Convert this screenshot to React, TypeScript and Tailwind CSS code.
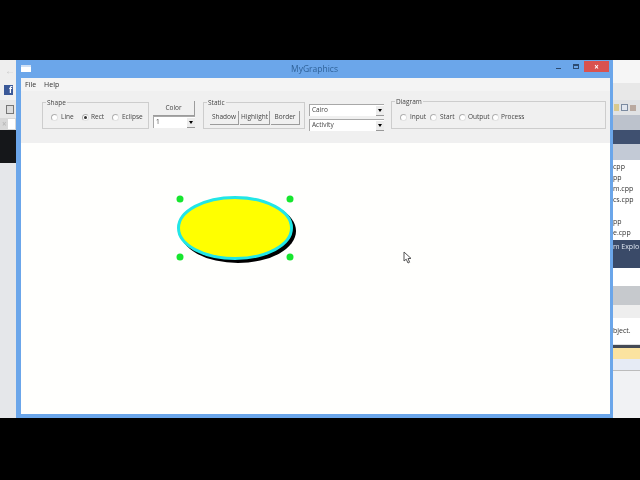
import React from "react";

const F = "font-['Open_Sans','Noto_Sans',sans-serif]";

function Radio({ on, label, gap, w }: { on?: boolean; label: string; gap: string; w: string }) {
  return (
    <div className={`flex items-center ${w}`}>
      <span className="w-[7px] h-[7px] rounded-full border border-[#b0b0b0] border-r-[#e2e2e2] border-b-[#e2e2e2] bg-white flex items-center justify-center shrink-0">
        {on && <span className="w-[3px] h-[3px] rounded-full bg-[#333]" />}
      </span>
      <span className={`${gap} text-[6.5px] leading-none text-[#444]`}>{label}</span>
    </div>
  );
}

function Group({ label, className, children }: { label: string; className: string; children: React.ReactNode }) {
  return (
    <div className={`relative border border-[#cdcdcd] ${className}`}>
      <span className="absolute left-[3px] top-[-5px] bg-[#f0f0f0] px-[1px] text-[6.5px] leading-[9px] text-[#444]">{label}</span>
      {children}
    </div>
  );
}

function Btn({ label, className }: { label: string; className: string }) {
  return (
    <div className={`h-[14px] bg-[#f0f0f0] border-r border-b border-[#9c9c9c] flex items-center justify-center text-[6.5px] leading-none text-[#444] ${className}`}>
      {label}
    </div>
  );
}

function Select({ value, className }: { value: string; className: string }) {
  return (
    <div className={`h-[12px] bg-white border-t border-l border-[#a8a8a8] flex items-center justify-between pl-[2px] ${className}`}>
      <span className="text-[6.5px] leading-none text-[#444]">{value}</span>
      <span className="w-[8px] h-[10px] bg-[#ececec] border-b border-[#999] flex items-center justify-center">
        <span className="w-0 h-0 border-l-[2.5px] border-r-[2.5px] border-t-[3px] border-l-transparent border-r-transparent border-t-black" />
      </span>
    </div>
  );
}

function LeftStrip() {
  return (
    <div className="w-[16px] shrink-0 flex flex-col bg-[#e6e8ea]">
      <div className="h-[20px] bg-[#eeeeee] flex items-center pl-[5px]">
        <span className="text-[10px] leading-none text-[#c9c9c9]">←</span>
      </div>
      <div className="h-[20px] bg-[#f0f0f0] flex items-center pl-[4px]">
        <span className="w-[9px] h-[10px] bg-[#3b5998] text-white text-[8px] leading-[10px] font-bold text-right pr-[1px]">f</span>
      </div>
      <div className="h-[18px] bg-[#e8e8e8] flex items-center pl-[6px]">
        <span className="w-[8px] h-[9px] border border-[#777] bg-[#ddd]" />
      </div>
      <div className="h-[12px] bg-[#d8d8d8] flex items-center pl-[2px] gap-[1px]">
        <span className="text-[8px] leading-none text-[#bbb] font-bold">×</span>
        <span className="w-[7px] h-[10px] bg-white" />
      </div>
      <div className="h-[33px] bg-[#15171a]" />
      <div className="flex-1 bg-[#e5e7ea]" />
    </div>
  );
}

function RightStrip() {
  const Row = ({ t }: { t: string }) => <div className="h-[11px] text-[7px] leading-[11px] text-[#333] whitespace-nowrap">{t}</div>;
  return (
    <div className="flex-1 flex flex-col bg-[#eceef2] overflow-hidden">
      <div className="h-[23px] bg-[#f6f6f6]" />
      <div className="h-[17px] bg-[#e8e8e8]" />
      <div className="h-[15px] bg-[#e0e2e4] flex items-center gap-[2px] pl-[1px]">
        <span className="w-[5px] h-[7px] bg-[#d9c98f]" />
        <span className="w-[7px] h-[7px] border border-[#7a8aa0] bg-[#dfe5ee]" />
        <span className="w-[6px] h-[6px] bg-[#b9a9a0]" />
      </div>
      <div className="h-[15px] bg-[#bcc2cc]" />
      <div className="h-[14px] bg-[#3f5070]" />
      <div className="h-[16px] bg-[#c3cad6]" />
      <div className="h-[80px] bg-white pt-[1px]">
        <Row t="cpp" />
        <Row t="pp" />
        <Row t="m.cpp" />
        <Row t="cs.cpp" />
        <div className="h-[11px]" />
        <Row t="pp" />
        <Row t="e.cpp" />
      </div>
      <div className="h-[28px] bg-[#3a4a68] text-[#dfe6f0] text-[7px] leading-[14px] whitespace-nowrap">m Explo</div>
      <div className="h-[18px] bg-white" />
      <div className="h-[19px] bg-[#c6c9cd]" />
      <div className="h-[13px] bg-[#eeeeee]" />
      <div className="h-[27px] bg-white text-[7px] leading-[26px] text-[#333] whitespace-nowrap border-b border-[#e0e0e0]">bject.</div>
      <div className="h-[3px] bg-[#444a55]" />
      <div className="h-[11px] bg-[#fbe3a0]" />
      <div className="h-[12px] bg-[#e6ebf5] border-b border-[#bcbcbc]" />
      <div className="flex-1 bg-[#f1f2f4]" />
    </div>
  );
}

export default function App() {
  return (
    <div className={`w-[640px] h-[480px] bg-black flex flex-col overflow-hidden ${F} blur-[0.35px]`}>
      <div className="h-[60px] shrink-0" />
      <div className="h-[358px] shrink-0 flex">
        <LeftStrip />
        <div className="w-[597px] shrink-0 bg-[#6ba6ea] flex flex-col pl-[5px] pr-[3px] pb-[4px]">
          <div className="h-[18px] shrink-0 relative flex items-center justify-center">
            <span className="absolute left-0 top-[5px] w-[10px] h-[7px] bg-white border-t-2 border-[#cfe0f5]" />
            <span className="text-[8.5px] leading-none text-[#2f6299] ml-[-2px]">MyGraphics</span>
            <div className="absolute right-[1px] top-[1px] flex items-start">
              <span className="w-[5px] h-[1px] bg-[#2c4a70] mt-[7px] mr-[12px]" />
              <span className="w-[6px] h-[5px] border border-[#2c4a70] border-t-2 mt-[3px] mr-[5px]" />
              <span className="w-[25px] h-[11px] bg-[#d9524f] text-white text-[8px] leading-[11px] text-center font-bold">×</span>
            </div>
          </div>
          <div className="flex-1 flex flex-col bg-[#fffffd] min-h-0">
            <div className="h-[65px] shrink-0 bg-[#f0f0f0] flex flex-col">
              <div className="h-[13px] flex items-center pl-[4px] gap-[8px] text-[7px] leading-none text-[#333] bg-[#f4f4f4]">
                <span>File</span>
                <span>Help</span>
              </div>
              <div className="flex items-start pl-[21px] pt-[10px]">
                <Group label="Shape" className="w-[107px] h-[27px] mt-[1px] flex items-center pl-[8px] pt-[4px]">
                  <Radio label="Line" gap="ml-[3px]" w="w-[31px]" />
                  <Radio on label="Rect" gap="ml-[2px]" w="w-[30px]" />
                  <Radio label="Eclipse" gap="ml-[3px]" w="w-[34px]" />
                </Group>
                <div className="w-[42px] ml-[4px] flex flex-col">
                  <Btn label="Color" className="w-full h-[15px]" />
                  <Select value="1" className="w-full" />
                </div>
                <Group label="Static" className="w-[102px] h-[27px] ml-[8px] mt-[1px] flex items-start pl-[6px] pt-[8px] gap-[1px]">
                  <Btn label="Shadow" className="w-[29px]" />
                  <Btn label="Highlight" className="w-[30px]" />
                  <Btn label="Border" className="w-[29px]" />
                </Group>
                <div className="w-[75px] ml-[4px] mt-[3px] flex flex-col gap-[3px]">
                  <Select value="Cairo" className="w-full" />
                  <Select value="Activity" className="w-full" />
                </div>
                <Group label="Diagram" className="w-[215px] h-[28px] ml-[7px] flex items-center pl-[8px] pt-[4px]">
                  <Radio label="Input" gap="ml-[3px]" w="w-[30px]" />
                  <Radio label="Start" gap="ml-[3px]" w="w-[29px]" />
                  <Radio label="Output" gap="ml-[2px]" w="w-[33px]" />
                  <Radio label="Process" gap="ml-[2px]" w="w-[32px]" />
                </Group>
              </div>
            </div>
            <div className="flex-1 relative">
              <svg width="140" height="80" viewBox="0 0 140 80" className="ml-[151px] mt-[48px]">
                <ellipse cx="66" cy="40" rx="58" ry="32" fill="#000" />
                <ellipse cx="63" cy="37" rx="56.5" ry="30.5" fill="#ffff00" stroke="#22e6e6" strokeWidth="3" />
                <circle cx="8" cy="8" r="3.5" fill="#16e62e" />
                <circle cx="118" cy="8" r="3.5" fill="#16e62e" />
                <circle cx="8" cy="66" r="3.5" fill="#16e62e" />
                <circle cx="118" cy="66" r="3.5" fill="#16e62e" />
              </svg>
              <svg width="10" height="13" viewBox="0 0 10 13" className="absolute left-[382px] top-[108px]">
                <path d="M1 1 L1 10 L3.2 8.2 L5 12 L6.6 11.2 L5 7.6 L8 7.4 Z" fill="#fff" stroke="#555" strokeWidth="1" />
              </svg>
            </div>
          </div>
        </div>
        <RightStrip />
      </div>
    </div>
  );
}
